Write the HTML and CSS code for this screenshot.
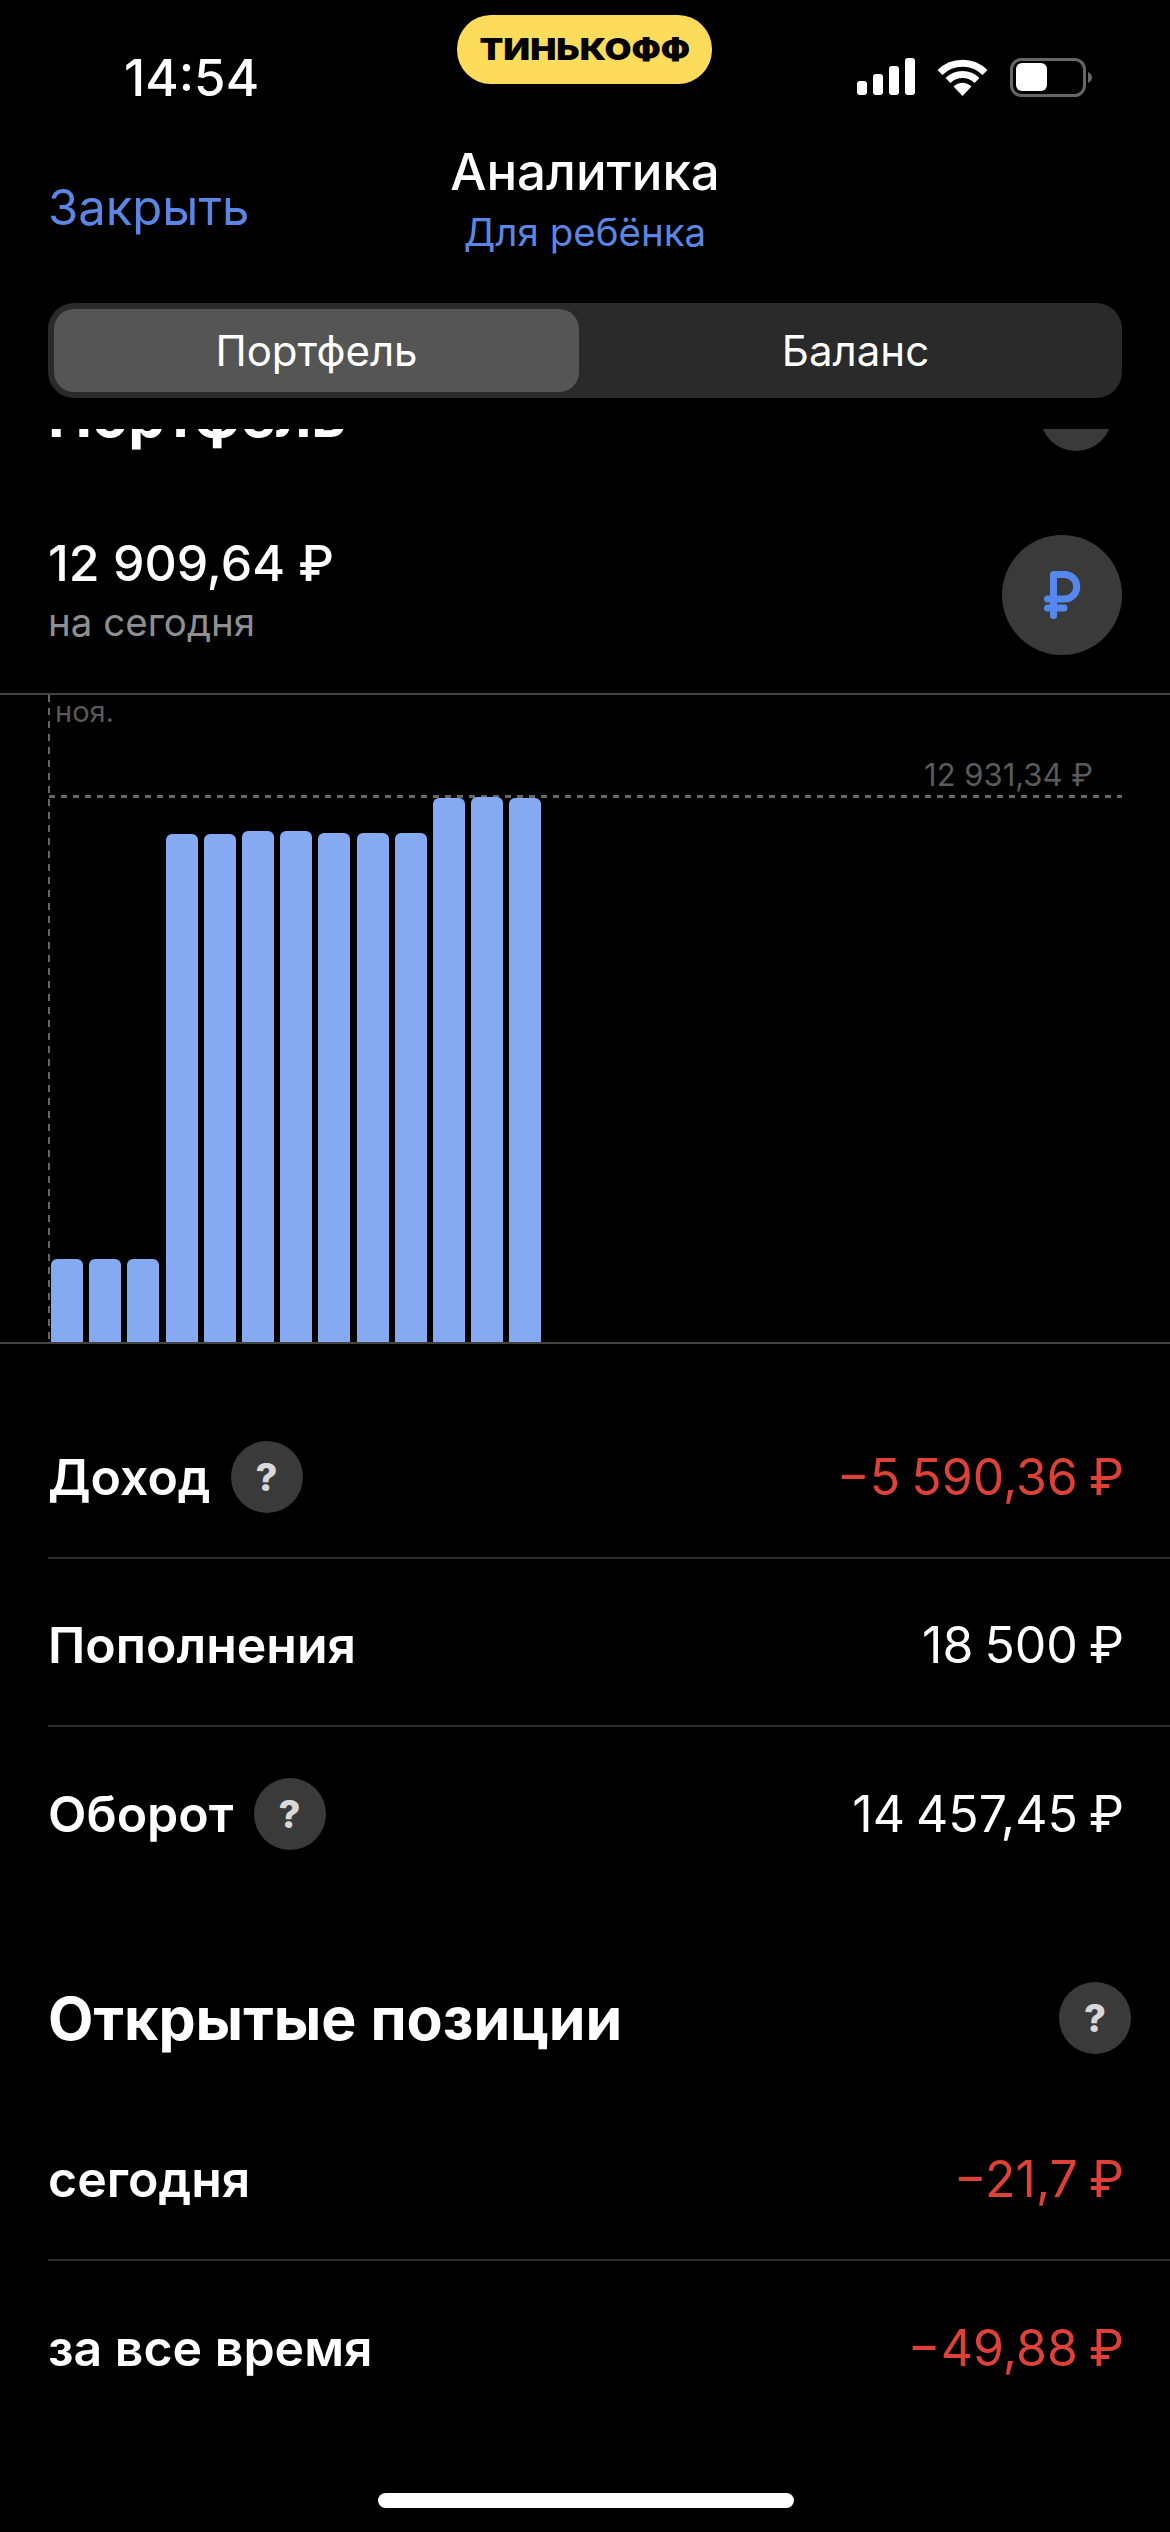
FILE: index.html
```html
<!DOCTYPE html>
<html lang="ru">
<head>
  <meta charset="UTF-8">
  <title>Аналитика</title>
  <link rel="stylesheet" href="styles.css">
</head>
<body>

  <div class="screen">
    <!-- Status bar -->
    <div class="status">
      <span class="time">14:54</span>
      <div class="brand"><span class="brand-name">ТИНЬКОФФ</span></div>
      <div class="status-icons">
        <svg width="58" height="37" viewBox="0 0 58 37" fill="#fff">
          <rect x="0" y="23" width="10" height="14" rx="3"/>
          <rect x="16" y="16" width="10" height="21" rx="3"/>
          <rect x="32" y="8" width="10" height="29" rx="3"/>
          <rect x="48" y="0" width="10" height="37" rx="3"/>
        </svg>
        <svg class="wifi" width="51" height="37" viewBox="0 0 51 37">
          <path d="M25.5 37 L16.5 27.5 Q25.5 20 34.5 27.5 Z" fill="#fff"/>
          <path d="M11 21.5 A20.5 20.5 0 0 1 40 21.5" fill="none" stroke="#fff" stroke-width="7"/>
          <path d="M3 13.5 A32 32 0 0 1 48 13.5" fill="none" stroke="#fff" stroke-width="7"/>
        </svg>
        <svg class="battery" width="83" height="39" viewBox="0 0 83 39">
          <rect x="1.5" y="1.5" width="73" height="36" rx="10" fill="none" stroke="#666" stroke-width="3"/>
          <rect x="6" y="5" width="31" height="28" rx="6" fill="#fff"/>
          <path d="M78 14 Q82 16 82 19.5 Q82 23 78 25 Z" fill="#666"/>
        </svg>
      </div>
    </div>

    <!-- Navigation -->
    <div class="nav">
      <a class="nav-close">Закрыть</a>
      <div class="nav-title">
        <div class="nav-name">Аналитика</div>
        <div class="nav-sub">Для ребёнка</div>
      </div>
    </div>

    <div class="segments">
      <div class="segment active">Портфель</div>
      <div class="segment">Баланс</div>
    </div>

    <!-- Heading scrolled under the nav -->
    <div class="clipped">
      <div class="clipped-row">
        <h2 class="section-title">Портфель</h2>
        <span class="help">?</span>
      </div>
    </div>

    <div class="summary">
      <div class="summary-text">
        <div class="summary-value">12 909,64 ₽</div>
        <div class="summary-note">на сегодня</div>
      </div>
      <div class="currency">
        <svg width="37" height="48" viewBox="0 0 37 48" fill="none" stroke="#5588ee" stroke-width="7" stroke-linecap="round" stroke-linejoin="round">
          <path d="M9.5 44.5 V3.5 H20.5 a12.25 12.25 0 0 1 0 24.5 H3.5"/>
          <path d="M3.5 37 H20"/>
        </svg>
      </div>
    </div>

    <!-- Chart -->
    <div class="chart">
      <span class="chart-month">ноя.</span>
      <span class="chart-max">12 931,34 ₽</span>
      <div class="chart-line"></div>
      <div class="bars">
        <div class="bar" style="height: 83px"></div>
        <div class="bar" style="height: 83px"></div>
        <div class="bar" style="height: 83px"></div>
        <div class="bar" style="height: 508px"></div>
        <div class="bar" style="height: 508px"></div>
        <div class="bar" style="height: 511px"></div>
        <div class="bar" style="height: 511px"></div>
        <div class="bar" style="height: 509px"></div>
        <div class="bar" style="height: 509px"></div>
        <div class="bar" style="height: 509px"></div>
        <div class="bar" style="height: 544px"></div>
        <div class="bar" style="height: 545px"></div>
        <div class="bar" style="height: 544px"></div>
      </div>
    </div>

    <!-- Totals -->
    <div class="rows totals">
      <div class="row">
        <div class="row-label">Доход <span class="help">?</span></div>
        <div class="row-value negative">−5 590,36 ₽</div>
      </div>
      <div class="row">
        <div class="row-label">Пополнения</div>
        <div class="row-value">18 500 ₽</div>
      </div>
      <div class="row">
        <div class="row-label">Оборот <span class="help">?</span></div>
        <div class="row-value">14 457,45 ₽</div>
      </div>
    </div>

    <div class="positions-head">
      <h2 class="section-title">Открытые позиции</h2>
      <span class="help">?</span>
    </div>

    <div class="rows positions">
      <div class="row">
        <div class="row-label">сегодня</div>
        <div class="row-value negative">−21,7 ₽</div>
      </div>
      <div class="row">
        <div class="row-label">за все время</div>
        <div class="row-value negative">−49,88 ₽</div>
      </div>
    </div>

    <div class="home-bar"></div>
  </div>

</body>
</html>
```

FILE: styles.css
```css
body {
  margin: 0;
  background-color: #000;
  color: #fff;
  font-family: 'Inter', 'Roboto', sans-serif;
}

.screen {
  position: relative;
  width: 1170px;
  height: 2532px;
  overflow: hidden;
}

/* status bar */
.status {
  position: relative;
  display: flex;
  justify-content: space-between;
  height: 128px;
  padding: 58px 77px 0 124px;
  box-sizing: border-box;
}

.time {
  font-size: 51px;
  font-weight: 500;
  line-height: 40px;
}

.brand {
  position: absolute;
  top: 15px;
  left: 457px;
  width: 255px;
  height: 69px;
  border-radius: 34px;
  background-color: #fcdc5a;
  color: #000;
  font-size: 30px;
  font-weight: 900;
  line-height: 68px;
  text-align: center;
}

.brand-name {
  display: inline-block;
  transform: scaleX(1.16);
}

.status-icons {
  display: flex;
  align-items: flex-start;
  gap: 22px;
}

.wifi {
  margin-top: 1px;
}

/* nav */
.nav {
  display: grid;
  grid-template-columns: 1fr auto 1fr;
  align-items: center;
  height: 142px;
  padding: 0 48px;
}

.nav-close {
  margin-top: 16px;
  color: #5b86e5;
  font-size: 49px;
}

.nav-title {
  padding-top: 6px;
  text-align: center;
}

.nav-name {
  font-size: 51px;
  font-weight: 500;
  line-height: 60px;
}

.nav-sub {
  color: #5b86e5;
  font-size: 38.5px;
  line-height: 60px;
}

.segments {
  display: flex;
  width: 1074px;
  height: 95px;
  margin: 33px 0 0 48px;
  padding: 6px;
  box-sizing: border-box;
  border-radius: 26px;
  background-color: #2a2a2a;
}

.segment {
  flex: 1;
  padding-left: 16px;
  border-radius: 20px;
  font-size: 42px;
  line-height: 83px;
  text-align: center;
}

.segment.active {
  flex: 0 0 525px;
  padding-left: 0;
  background-color: #555;
}

/* heading cut off by the nav */
.clipped {
  display: flex;
  align-items: flex-end;
  height: 22px;
  margin-top: 31px;
  overflow: hidden;
}

.clipped-row {
  display: flex;
  flex: 1;
  justify-content: space-between;
  align-items: center;
  height: 72px;
  flex-shrink: 0;
  padding: 0 58px 0 48px;
}

.section-title {
  margin: 0;
  font-size: 59px;
  font-weight: 700;
}

.help {
  display: inline-block;
  width: 72px;
  height: 72px;
  border-radius: 50%;
  background-color: #3a3a3a;
  color: #d8d8d8;
  font-size: 38px;
  font-weight: 800;
  line-height: 72px;
  text-align: center;
}

/* summary */
.summary {
  display: flex;
  justify-content: space-between;
  align-items: center;
  height: 244px;
  padding: 46px 48px 0 48px;
  border-bottom: 2px solid #444;
  box-sizing: border-box;
}

.summary-text {
  margin-top: -10px;
}

.summary-value {
  font-size: 50px;
  font-weight: 500;
  line-height: 64px;
}

.summary-note {
  color: #8e8e93;
  font-size: 38.5px;
  line-height: 54px;
}

.currency {
  display: flex;
  justify-content: center;
  align-items: center;
  width: 120px;
  height: 120px;
  border-radius: 50%;
  background-color: #3a3a3a;
}

/* chart */
.chart {
  position: relative;
  height: 649px;
  border-bottom: 2px solid #444;
  box-sizing: border-box;
}

.chart::before {
  content: "";
  position: absolute;
  top: 0;
  bottom: 0;
  left: 48px;
  width: 2px;
  background: repeating-linear-gradient(to bottom, #666 0 7px, transparent 7px 13px);
}

.chart-month {
  position: absolute;
  top: -3px;
  left: 55px;
  color: #5a5a5a;
  font-size: 29px;
  line-height: 40px;
}

.chart-max {
  position: absolute;
  top: 60px;
  right: 77px;
  color: #5a5a5a;
  font-size: 31px;
  line-height: 40px;
}

.chart-line {
  position: absolute;
  top: 100px;
  left: 49px;
  width: 1073px;
  height: 3px;
  background: repeating-linear-gradient(to right, #666 0 6px, transparent 6px 12px);
}

.bars {
  position: absolute;
  bottom: 0;
  left: 51px;
  display: flex;
  align-items: flex-end;
  gap: 6.2px;
}

.bar {
  width: 32px;
  border-radius: 6px 6px 0 0;
  background-color: #85aaf2;
}

/* rows */
.rows {
  padding-left: 48px;
}

.totals {
  margin-top: 47px;
}

.positions {
  margin-top: 39px;
}

.row {
  display: flex;
  justify-content: space-between;
  align-items: center;
  height: 168px;
  padding: 5px 46px 0 0;
  border-bottom: 2px solid #2c2c2c;
  box-sizing: border-box;
}

.row:last-child {
  border-bottom: none;
}

.row-label {
  display: flex;
  align-items: center;
  gap: 20px;
  font-size: 50px;
  font-weight: 600;
}

.row-value {
  font-size: 50px;
  word-spacing: -3px;
}

.negative {
  color: #dd4137;
}

.positions-head {
  display: flex;
  justify-content: space-between;
  align-items: center;
  height: 72px;
  margin-top: 87px;
  padding: 0 39px 0 48px;
}

.home-bar {
  position: absolute;
  bottom: 24px;
  left: 378px;
  width: 416px;
  height: 15px;
  border-radius: 8px;
  background-color: #fff;
}
```
